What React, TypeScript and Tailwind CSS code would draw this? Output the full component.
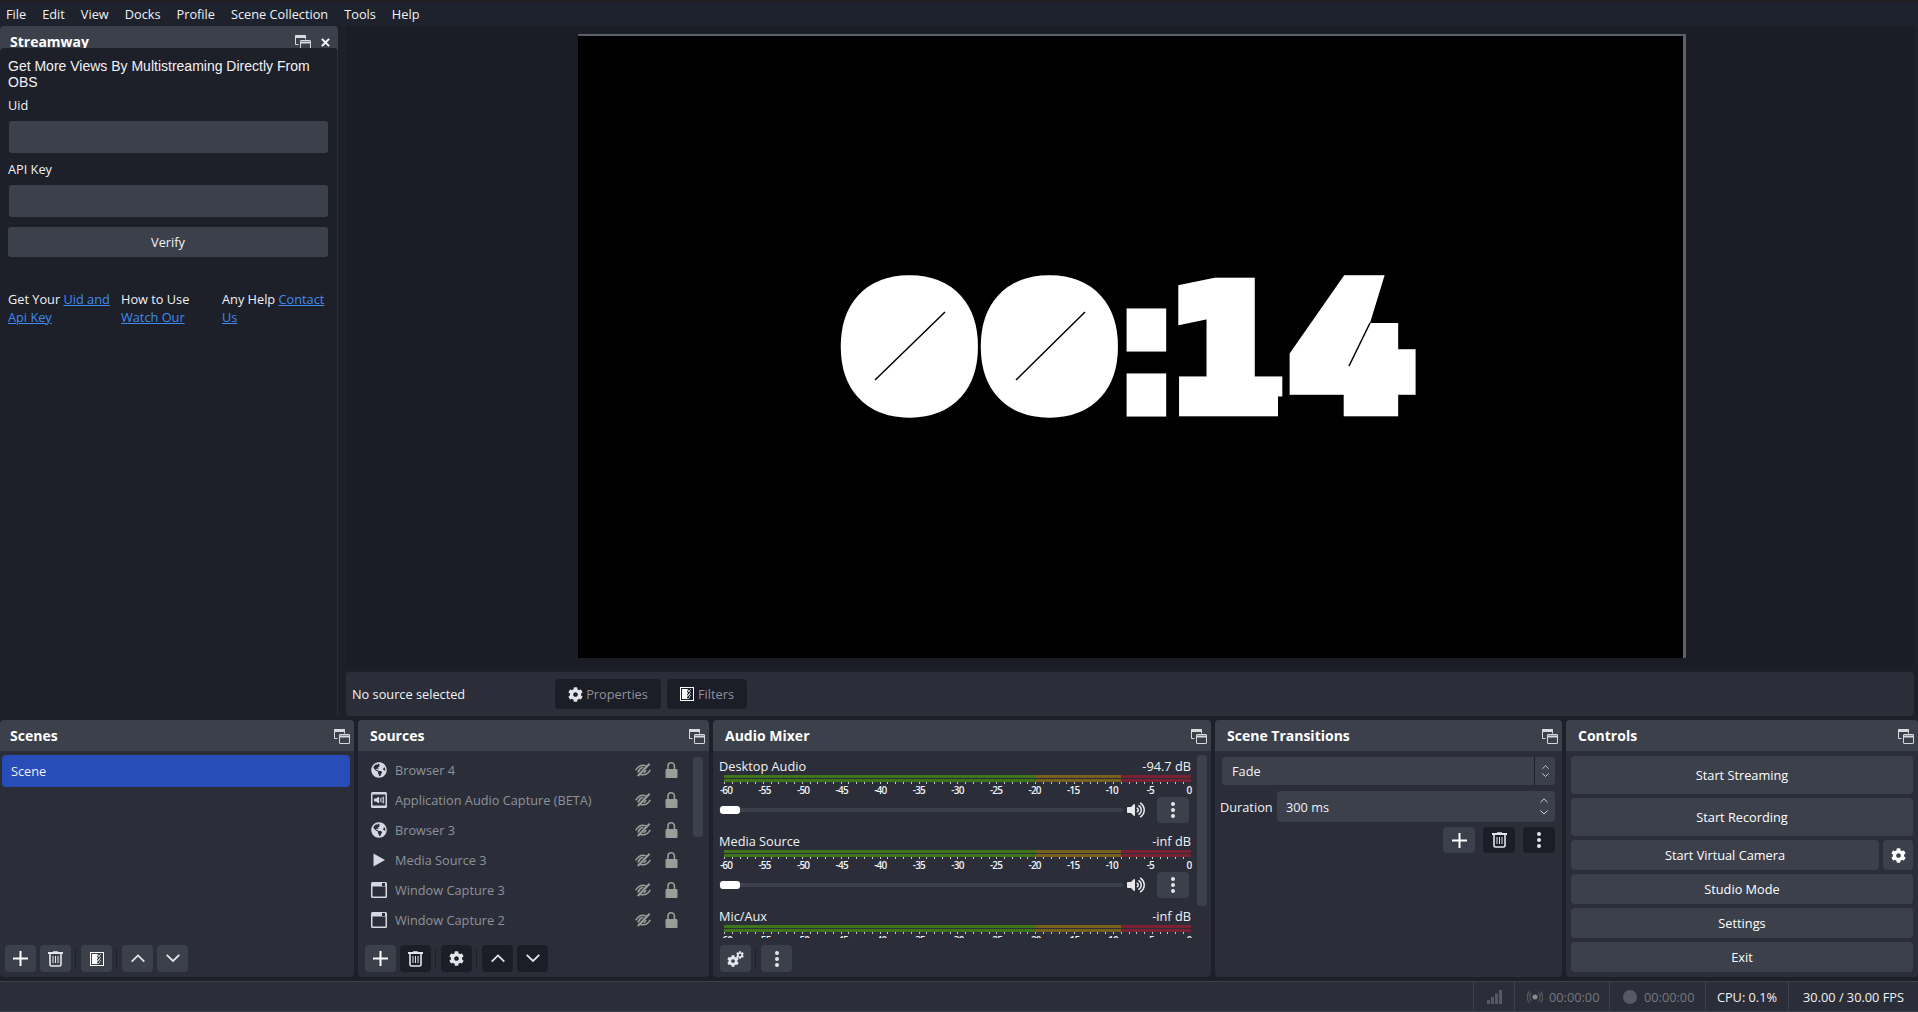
import { FaCog, FaGlobeAmericas, FaVolumeUp } from "react-icons/fa";
import type { ReactNode } from "react";

const SOURCES = [
  { name: "Browser 4", icon: "globe" },
  { name: "Application Audio Capture (BETA)", icon: "audio" },
  { name: "Browser 3", icon: "globe" },
  { name: "Media Source 3", icon: "play" },
  { name: "Window Capture 3", icon: "window" },
  { name: "Window Capture 2", icon: "window" },
];

const SCALE = ["-60", "-55", "-50", "-45", "-40", "-35", "-30", "-25", "-20", "-15", "-10", "-5", "0"];

function FloatIcon() {
  return (
    <svg width="16" height="16" viewBox="0 0 16 16" fill="none" stroke="#d8d9dc" strokeWidth="1">
      <path d="M3.5 10.5h-3v-9h10v4" />
      <path d="M.5 1.5h10v2H.5z" fill="#d8d9dc" />
      <rect x="5.5" y="6.5" width="10" height="9" rx="0.5" fill="#3c404b" />
      <path d="M5.5 8.5h10" strokeWidth="2" />
    </svg>
  );
}

function Plus() {
  return (
    <svg width="15" height="15" viewBox="0 0 15 15" stroke="#fff" strokeWidth="2">
      <path d="M7.5 0v15M0 7.5h15" />
    </svg>
  );
}

function Trash() {
  return (
    <svg width="15" height="16" viewBox="0 0 15 16" fill="none" stroke="#e4e5ea" strokeWidth="1.2">
      <path d="M0 2h15M5 1.2h5" strokeWidth="2" />
      <path d="M2 3v10.5a1.5 1.5 0 0 0 1.5 1.5h8a1.5 1.5 0 0 0 1.5-1.5V3" strokeWidth="1.6" />
      <path d="M5 5v7M7.5 5v7M10 5v7" strokeWidth="1" />
    </svg>
  );
}

function FilterIcon({ size = 14 }: { size?: number }) {
  return (
    <svg width={size} height={size} viewBox="0 0 14 14">
      <rect x="0.5" y="0.5" width="13" height="13" fill="none" stroke="#fff" />
      <rect x="2" y="2" width="5" height="10" fill="#fff" />
      <path d="M7 2h1v2H7zM9 3h1v2H9zM7 5h1v2H7zM9 6h1v2H9zM7 8h1v2H7zM9 9h1v2H9zM8 3h1v2H8zM8 7h1v2H8zM10 2h1v1h-1zM10 5h1v1h-1zM10 8h1v1h-1zM7 11h2v1H7z" fill="#b8b9bd" />
    </svg>
  );
}

function Chevron({ up, size = 14, w = 1.8 }: { up?: boolean; size?: number; w?: number }) {
  return (
    <svg width={size} height={size * 0.6} viewBox="0 0 14 8.4" fill="none" stroke="#e4e5ea" strokeWidth={w}>
      <path d={up ? "M.7 7.6 7 1.4l6.3 6.2" : "M.7.8 7 7l6.3-6.2"} />
    </svg>
  );
}

function Dots() {
  return (
    <svg width="6" height="16" viewBox="0 0 6 16" fill="#e4e5ea">
      <circle cx="3" cy="2" r="2" />
      <circle cx="3" cy="8" r="2" />
      <circle cx="3" cy="14" r="2" />
    </svg>
  );
}

function EyeSlash() {
  return (
    <svg width="16" height="14" viewBox="0 0 16 14" fill="none" stroke="#9c9c98" strokeWidth="1.6">
      <path d="M.6 7.2C3 3.6 5.5 2.2 8 2.2c1.5 0 3 .5 4.2 1.4M15.4 6.8c-2 3.4-4.6 5-7.4 5-1 0-2-.2-2.8-.6" />
      <path d="M3 9.6C4.5 5.5 6 4.5 8.4 4.4M8.4 9.6c1.6-.2 2.4-1 2.6-2.4" />
      <path d="M2.8 13 14.6.8" strokeWidth="2" />
    </svg>
  );
}

function LockIcon() {
  return (
    <svg width="13" height="16" viewBox="0 0 13 16">
      <path d="M3 8V4a3.2 3.2 0 0 1 6.4 0v4" fill="none" stroke="#9c9c98" strokeWidth="1.6" />
      <rect x="0.5" y="7" width="12" height="9" rx="1" fill="#9c9c98" />
    </svg>
  );
}

function SourceIcon({ kind }: { kind: string }) {
  if (kind === "globe") return <FaGlobeAmericas size={16} color="#d5d7e2" />;
  if (kind === "play")
    return (
      <svg width="16" height="16" viewBox="0 0 16 16" fill="#d5d7e2">
        <path d="M2.5 1.5v13l11.5-6.5z" />
      </svg>
    );
  if (kind === "audio")
    return (
      <svg width="16" height="16" viewBox="0 0 16 16">
        <rect width="16" height="16" rx="1.5" fill="#d5d7e2" />
        <rect x="1.5" y="2.5" width="13" height="11" fill="#2b2e38" />
        <path d="M3 6.5h2L8 4.5v7L5 9.5H3z" fill="#d5d7e2" />
        <path d="M9.3 6v4M11 5v6M12.6 4.5v7" stroke="#d5d7e2" strokeWidth="0.9" />
      </svg>
    );
  return (
    <svg width="16" height="16" viewBox="0 0 16 16">
      <rect width="16" height="16" rx="1.5" fill="#d5d7e2" />
      <rect x="1.5" y="4.5" width="13" height="10" fill="#2b2e38" />
      <rect x="11" y="1" width="3" height="3" fill="#2b2e38" />
    </svg>
  );
}

function MixerGears() {
  return (
    <span className="relative flex h-[16px] w-[17px] items-end">
      <FaCog size={12} color="#e4e5ea" />
      <FaCog size={8} color="#e4e5ea" className="absolute right-0 top-0" />
    </span>
  );
}

function Dock({ title, className, flush, children }: { title: string; className: string; flush?: boolean; children: ReactNode }) {
  return (
    <section className={`flex flex-col overflow-hidden rounded-[4px] bg-[#2b2e38] ${className}`}>
      <header className={`flex h-[31px] shrink-0 items-center justify-between bg-[#3c404b] pr-[4px] ${flush ? "pl-[10px]" : "pl-[12px]"}`}>
        <span className="text-[14px] font-bold text-white">{title}</span>
        <FloatIcon />
      </header>
      {children}
    </section>
  );
}

function ToolButton({ children, dark }: { children: ReactNode; dark?: boolean }) {
  return (
    <button
      type="button"
      className={`flex h-[27px] w-[31px] items-center justify-center rounded-[4px] ${dark ? "bg-[#1b1d27]" : "bg-[#3c404b]"}`}
    >
      {children}
    </button>
  );
}

function Sep() {
  return <span className="mr-px h-[21px] w-px bg-[#1d1f26]" />;
}

function MixerChannel({ name, level, clipped }: { name: string; level: string; clipped?: boolean }) {
  const ticks = "bg-[repeating-linear-gradient(90deg,#c8c9cc_0,#c8c9cc_1px,transparent_1px,transparent_7.78px)]";
  return (
    <div className={`flex flex-col ${clipped ? "h-[31px] overflow-hidden" : "h-[75px]"}`}>
      <div className="flex h-[18px] shrink-0 items-center justify-between pr-[6px]">
        <span>{name}</span>
        <span>{level}</span>
      </div>
      <div className="ml-[5px] mr-[6px] flex shrink-0 flex-col gap-px">
        {[0, 1].map((row) => (
          <div key={row} className="flex h-[3px]">
            <span className="w-[312px] bg-[#40741a]" />
            <span className="w-[85px] bg-[#79601c]" />
            <span className="flex-1 bg-[#7a2233]" />
          </div>
        ))}
      </div>
      <div className={`ml-[5px] mr-[6px] h-[2px] shrink-0 ${ticks}`} />
      <div className="ml-[7px] mr-[8px] flex h-[12px] shrink-0 items-center justify-between text-[10px] font-semibold tracking-[-0.8px]">
        {SCALE.map((mark) => (
          <span key={mark} className="flex w-0 justify-center">
            {mark}
          </span>
        ))}
      </div>
      <div className="mt-px flex h-[26px] shrink-0 items-center">
        <div className="relative h-[4px] w-[404px] rounded-full bg-[#3c404b]">
          <span className="absolute -top-[2px] left-[1px] h-[8px] w-[20px] rounded-[3px] bg-white" />
        </div>
        <FaVolumeUp size={18} color="#e8e8ea" className="ml-[4px]" />
        <button type="button" className="ml-[12px] flex h-[26px] w-[32px] items-center justify-center rounded-[4px] bg-[#3c404b]">
          <Dots />
        </button>
      </div>
    </div>
  );
}

function ControlButton({ label, tall, className = "" }: { label: string; tall?: boolean; className?: string }) {
  return (
    <button
      type="button"
      className={`flex items-center justify-center rounded-[4px] bg-[#3c404b] text-white ${tall ? "h-[38px]" : "h-[30px]"} ${className}`}
    >
      {label}
    </button>
  );
}

// the timer is a browser source in the preview, heavy stroke stands in for its display font
function Preview() {
  return (
    <svg viewBox="0 0 1105 622" className="block h-[622px] w-[1105px] bg-black">
      <g fill="#fff" stroke="#fff" fontFamily="'DejaVu Sans', sans-serif" fontWeight="700">
        <g strokeLinejoin="round" strokeWidth="42" fontSize="168">
          <text transform="translate(275.3 362.4) scale(.96 .84)">0</text>
          <text transform="translate(415.3 362.4) scale(.96 .84)">0</text>
        </g>
        <g strokeLinejoin="miter" strokeMiterlimit="2">
          <text transform="translate(533.5 375.5) scale(.97 1)" fontSize="180" strokeWidth="9">:</text>
          <text transform="translate(591 370.8) scale(.85 .84)" fontSize="195" strokeWidth="22">1</text>
          <text transform="translate(716.6 368.2) scale(.88 .84)" fontSize="190" strokeWidth="28">4</text>
        </g>
      </g>
      {/* cuts in the digits */}
      <path d="M297 344 367 276M438 344 507 276M771 330 792 287" stroke="#000" strokeWidth="1.5" />
      <path d="M700 238H738L711 307H700ZM807 238H850V287H792ZM700 360.5H765V390H700Z" fill="#000" />
    </svg>
  );
}

export default function App() {
  return (
    <div className="flex h-[1012px] w-[1918px] flex-col overflow-hidden bg-[#1d1f29] font-['Open_Sans',sans-serif] text-[12.75px] leading-[18px] text-[#f1f2f6]">
      {/* Menu bar */}
      <nav className="flex h-[26px] shrink-0 items-center gap-[16px] border-t-2 border-[#211f1f] bg-[#1e222c] pl-[6px]">
        {["File", "Edit", "View", "Docks", "Profile", "Scene Collection", "Tools", "Help"].map((item) => (
          <span key={item}>{item}</span>
        ))}
      </nav>

      <div className="flex h-[690px] shrink-0">
        {/* Streamway dock */}
        <aside className="flex w-[338px] shrink-0 flex-col overflow-hidden rounded-t-[4px] bg-[#3c404b]">
          <header className="flex h-[22px] shrink-0 items-start justify-between overflow-hidden pl-[10px] pr-[8px] pt-[7px]">
            <span className="text-[14px] font-bold text-white">Streamway</span>
            <span className="mt-[1px] flex items-start gap-[10px]">
              <FloatIcon />
              <svg width="9" height="9" viewBox="0 0 10 10" stroke="#fff" strokeWidth="2.2" className="mt-[4px]">
                <path d="M1 1l8 8M9 1 1 9" />
              </svg>
            </span>
          </header>
          <div className="flex flex-1 flex-col rounded-t-[4px] border-r border-[#2b2e38] bg-[#1d1f29] px-[8px] pt-[10px]">
            <p className="font-['Liberation_Sans',sans-serif] text-[14px] leading-[16px]">
              Get More Views By Multistreaming Directly From OBS
            </p>
            <label className="mt-[6px] block h-[18px]">Uid</label>
            <div className="mx-px mt-[7px] h-[32px] rounded-[3px] bg-[#3c404b]" />
            <label className="mt-[7px] block h-[18px]">API Key</label>
            <div className="mx-px mt-[7px] h-[32px] rounded-[3px] bg-[#3c404b]" />
            <button type="button" className="mt-[10px] h-[30px] w-[320px] rounded-[3px] bg-[#3c404b]">
              Verify
            </button>
            <div className="mt-[33px] grid grid-cols-[113px_101px_1fr] leading-[18px]">
              <p>
                Get Your <a className="text-[#3f8cf0] underline">Uid and Api Key</a>
              </p>
              <p>
                How to Use <a className="text-[#3f8cf0] underline">Watch Our</a>
              </p>
              <p>
                Any Help <a className="text-[#3f8cf0] underline">Contact Us</a>
              </p>
            </div>
          </div>
        </aside>

        {/* Preview and context bar */}
        <main className="ml-[8px] flex min-w-0 flex-1 flex-col gap-[4px] pr-[4px]">
          <div className="flex h-[642px] shrink-0 justify-center rounded-b-[4px] bg-[#1a1c26] pl-[4px] pt-[8px]">
            <div className="h-[624px] border-r-[3px] border-t-2 border-[#5d6069]">
              <Preview />
            </div>
          </div>
          <div className="flex h-[44px] shrink-0 items-center rounded-[4px] bg-[#2b2e38] pl-[6px]">
            <span className="w-[203px]">No source selected</span>
            <button type="button" className="flex h-[30px] w-[106px] items-center justify-center gap-[3px] rounded-[4px] bg-[#1b1d27] text-[#8f919b]">
              <FaCog size={15} color="#e4e5ea" />
              Properties
            </button>
            <button type="button" className="ml-[6px] flex h-[30px] w-[80px] items-center justify-center gap-[4px] rounded-[4px] bg-[#1b1d27] text-[#8f919b]">
              <FilterIcon />
              Filters
            </button>
          </div>
        </main>
      </div>

      {/* Bottom docks */}
      <div className="mt-[4px] flex h-[257px] shrink-0 gap-[4px]">
        <Dock title="Scenes" className="w-[354px] shrink-0" flush>
          <div className="flex flex-1 flex-col px-[2px] pt-[4px]">
            <div className="flex h-[32px] w-[348px] items-center rounded-[4px] bg-[#284cb8] pl-[9px]">Scene</div>
            <div className="mt-auto flex items-center gap-[4px] pb-[5px] pl-[3px]">
              <ToolButton><Plus /></ToolButton>
              <ToolButton><Trash /></ToolButton>
              <Sep />
              <ToolButton><FilterIcon /></ToolButton>
              <Sep />
              <ToolButton><Chevron up /></ToolButton>
              <ToolButton><Chevron /></ToolButton>
            </div>
          </div>
        </Dock>

        <Dock title="Sources" className="w-[351px] shrink-0">
          <div className="relative flex flex-1 flex-col">
            <ul className="flex flex-col pt-[4px]">
              {SOURCES.map((source) => (
                <li key={source.name} className="flex h-[30px] items-center pl-[13px] text-[#8f919b]">
                  <span className="flex w-[24px] shrink-0">
                    <SourceIcon kind={source.icon} />
                  </span>
                  <span className="w-[240px] shrink-0 whitespace-nowrap">{source.name}</span>
                  <EyeSlash />
                  <span className="ml-[14px]">
                    <LockIcon />
                  </span>
                </li>
              ))}
            </ul>
            <span className="absolute right-[6px] top-[6px] h-[80px] w-[10px] rounded-[3px] bg-[#3c404b]" />
            <div className="mt-auto flex items-center gap-[4px] pb-[5px] pl-[7px]">
              <ToolButton><Plus /></ToolButton>
              <ToolButton dark><Trash /></ToolButton>
              <Sep />
              <ToolButton dark><FaCog size={15} color="#e4e5ea" /></ToolButton>
              <Sep />
              <ToolButton dark><Chevron up /></ToolButton>
              <ToolButton dark><Chevron /></ToolButton>
            </div>
          </div>
        </Dock>

        <Dock title="Audio Mixer" className="w-[498px] shrink-0">
          <div className="relative flex flex-1 flex-col pl-[6px]">
            <div className="flex w-[478px] flex-col pt-[6px]">
              <MixerChannel name="Desktop Audio" level="-94.7 dB" />
              <MixerChannel name="Media Source" level="-inf dB" />
              <MixerChannel name="Mic/Aux" level="-inf dB" clipped />
            </div>
            <span className="absolute right-[4px] top-[4px] h-[151px] w-[10px] rounded-[3px] bg-[#3c404b]" />
            <div className="mt-auto flex items-center gap-[4px] pb-[5px] pl-[1px]">
              <ToolButton><MixerGears /></ToolButton>
              <Sep />
              <ToolButton><Dots /></ToolButton>
            </div>
          </div>
        </Dock>

        <Dock title="Scene Transitions" className="w-[347px] shrink-0">
          <div className="flex flex-1 flex-col px-[7px] pt-[6px]">
            <div className="flex h-[28px] shrink-0 items-center rounded-[4px] bg-[#3c404b] pl-[10px]">
              <span className="flex-1">Fade</span>
              <span className="flex h-full w-[21px] flex-col items-center justify-center gap-[3px] border-l border-[#1d1f26]">
                <Chevron up size={7} w={1.6} />
                <Chevron size={7} w={1.6} />
              </span>
            </div>
            <div className="mt-[6px] flex h-[31px] shrink-0 items-center">
              <span className="-ml-[2px] w-[57px] shrink-0">Duration</span>
              <div className="flex h-full flex-1 items-center justify-between rounded-[4px] bg-[#3c404b] pl-[9px] pr-[7px]">
                <span>300 ms</span>
                <span className="flex flex-col items-center gap-[7px]">
                  <Chevron up size={8} w={1.6} />
                  <Chevron size={8} w={1.6} />
                </span>
              </div>
            </div>
            <div className="mt-[5px] flex justify-end gap-[8px]">
              <button type="button" className="flex h-[26px] w-[32px] items-center justify-center rounded-[4px] bg-[#3c404b]"><Plus /></button>
              <button type="button" className="flex h-[26px] w-[32px] items-center justify-center rounded-[4px] bg-[#1b1d27]"><Trash /></button>
              <button type="button" className="flex h-[26px] w-[32px] items-center justify-center rounded-[4px] bg-[#1b1d27]"><Dots /></button>
            </div>
          </div>
        </Dock>

        <Dock title="Controls" className="min-w-0 flex-1">
          <div className="flex flex-1 flex-col gap-[4px] px-[5px] pt-[5px]">
            <ControlButton label="Start Streaming" tall />
            <ControlButton label="Start Recording" tall />
            <div className="flex gap-[4px]">
              <ControlButton label="Start Virtual Camera" className="flex-1" />
              <button type="button" className="flex h-[30px] w-[30px] items-center justify-center rounded-[4px] bg-[#3c404b]">
                <FaCog size={15} color="#fff" />
              </button>
            </div>
            <ControlButton label="Studio Mode" />
            <ControlButton label="Settings" />
            <ControlButton label="Exit" />
          </div>
        </Dock>
      </div>

      {/* Status bar */}
      <footer className="mt-[4px] flex h-[31px] shrink-0 justify-end border-y border-[#3c404b] bg-[#2b2e38]">
        <div className="flex w-[41px] items-center justify-center border-l border-[#3c404b]">
          <svg width="15" height="14" viewBox="0 0 15 14" fill="#575a63">
            <rect x="0" y="10" width="3" height="4" />
            <rect x="4" y="7" width="3" height="7" />
            <rect x="8" y="3.5" width="3" height="10.5" />
            <rect x="12" y="0" width="3" height="14" />
          </svg>
        </div>
        <div className="flex w-[95px] items-center gap-[6px] border-l border-[#3c404b] pl-[12px] text-[#75777f]">
          <svg width="16" height="12" viewBox="0 0 16 12" fill="none" stroke="#575a63" strokeWidth="1.2">
            <circle cx="8" cy="6" r="2.5" fill="#8a8c93" stroke="none" />
            <path d="M4.5 2a5.5 5.5 0 0 0 0 8M11.5 2a5.5 5.5 0 0 1 0 8M2.4.5a8 8 0 0 0 0 11M13.6.5a8 8 0 0 1 0 11" />
          </svg>
          00:00:00
        </div>
        <div className="flex w-[96px] items-center gap-[7px] border-l border-[#3c404b] pl-[13px] text-[#75777f]">
          <span className="h-[14px] w-[14px] rounded-full bg-[#565963]" />
          00:00:00
        </div>
        <div className="flex w-[83px] items-center justify-center border-l border-[#3c404b]">CPU: 0.1%</div>
        <div className="flex w-[130px] items-center justify-center border-l border-[#3c404b]">30.00 / 30.00 FPS</div>
      </footer>
    </div>
  );
}
